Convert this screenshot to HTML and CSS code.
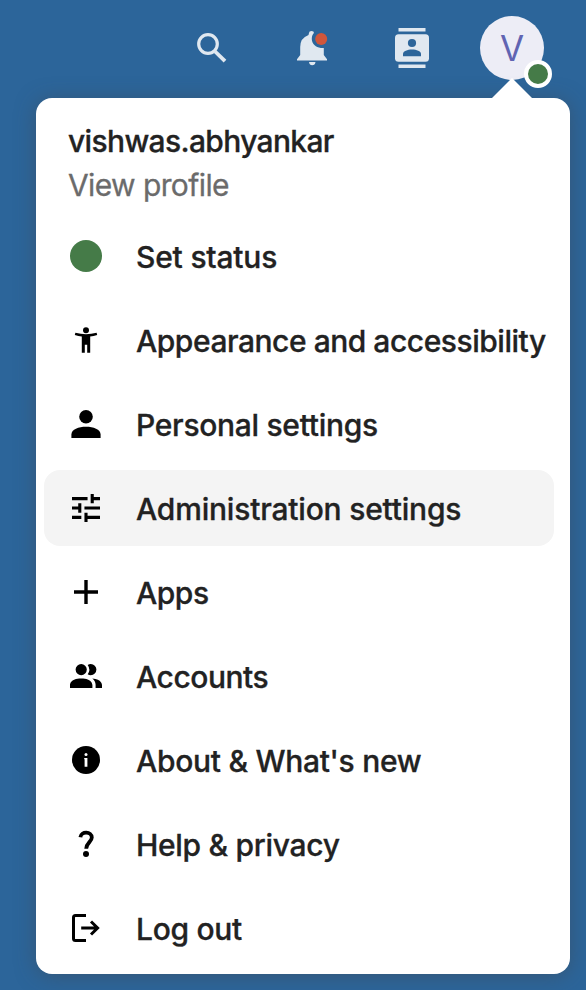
FILE: index.html
```
<!DOCTYPE html>
<html lang="en">
<head>
<meta charset="utf-8">
<title>Account menu</title>
<link rel="stylesheet" href="styles.css">
</head>
<body>
<header class="topbar">
  <button class="tool" aria-label="Search"><svg width="32" height="32" viewBox="0 0 32 32" fill="none" stroke="#e0e8f0"><circle cx="12" cy="12" r="9.3" stroke-width="3.2"/><path d="M19.1 19.5 29 29.2" stroke-width="3.8"/></svg></button>
  <button class="tool" aria-label="Notifications"><svg width="32" height="36" viewBox="0 0 32 36"><path fill="#e0e8f0" d="M13 3Q13 1 15.5 1Q18 1 18 3C13.8 7 15 18.5 27.8 18V25L31 29.2V30.5H1V29.2L4.2 25V17Q4.2 8 12.5 5ZM13 32H19.5Q19 35.2 16.2 35.2Q13.5 35.2 13 32Z"/><circle cx="25.2" cy="9" r="6" fill="#d0563b"/></svg></button>
  <button class="tool" aria-label="Contacts"><svg width="34" height="40" viewBox="0 0 34 40"><path fill="#e0e8f0" d="M3.5 0h27v3.6h-27zM3.5 36.4h27V40h-27z"/><rect y="6.2" width="34" height="27.6" rx="3.5" fill="#e0e8f0"/><g fill="#2c659a"><circle cx="17" cy="15" r="4.1"/><path d="M8 28.2V26c0-6 18-6 18 0v2.2z"/></g></svg></button>
  <button class="avatar" aria-label="Account">V<span class="presence"></span></button>
</header>
<nav class="menu">
  <div class="profile"><div class="name">vishwas.abhyankar</div><div class="view">View profile</div></div>
  <ul class="items">
    <li class="item"><svg viewBox="0 0 32 32"><circle cx="16" cy="16" r="16" fill="#457b48"/></svg><span class="loose">Set status</span></li>
    <li class="item"><svg viewBox="0 0 32 32"><circle cx="16" cy="6.2" r="3"/><path d="M5.4 8.8Q16 11.6 26.6 8.8L27.2 11.1Q23.5 12.2 20.2 12.5V28.7H17.2V20.7H14.8V28.7H11.8V12.5Q8.5 12.2 4.8 11.1Z"/></svg><span class="tight">Appearance and accessibility</span></li>
    <li class="item"><svg viewBox="0 0 32 32"><circle cx="16" cy="8.7" r="6.8"/><path d="M1.4 30v-3.5C1.4 16.2 30.6 16.2 30.6 26.5V30z"/></svg><span>Personal settings</span></li>
    <li class="item active"><svg viewBox="1.714 1.714 20.571 20.571"><path d="M3 17v2h6v-2H3M3 5v2h10V5H3m10 16v-2h8v-2h-8v-2h-2v6h2M7 9v2H3v2h4v2h2V9H7m14 4v-2H11v2h10m-6-4h2V7h4V5h-4V3h-2v6z"/></svg><span class="loose">Administration settings</span></li>
    <li class="item"><svg viewBox="0 0 32 32"><path d="M14.3 4h3.4v10.300H28v3.400H17.700V28h-3.400V17.700H4v-3.400h10.300z"/></svg><span class="tight">Apps</span></li>
    <li class="item"><svg viewBox="2 1.5 20 20"><path d="M16 17v2H2v-2s0-4 7-4 7 4 7 4m-3.500-9.500A3.500 3.500 0 1 0 9 11a3.500 3.500 0 0 0 3.500-3.500m3.440 5.500A5.320 5.320 0 0 1 18 17v2h4v-2s0-3.630-6.060-4M15 4a3.390 3.390 0 0 0-1.930.590 5 5 0 0 1 0 5.820A3.390 3.390 0 0 0 15 11a3.500 3.500 0 0 0 0-7z"/></svg><span class="tight">Accounts</span></li>
    <li class="item"><svg viewBox="0 0 32 32"><circle cx="16" cy="16" r="14"/><circle cx="16" cy="10.6" r="1.5" fill="#fff"/><path fill="#fff" d="M14.200 14h3.200v8.800h-2.800V15.300h-.4z"/></svg><span>About &amp; What's new</span></li>
    <li class="item"><svg viewBox="0 0 32 32"><path d="M10.400 9.200C11 3 21.800 3.200 21.800 9.600C21.800 13.800 16.200 14.800 16.200 20.800" fill="none" stroke="#000" stroke-width="3.800"/><circle cx="16" cy="26.100" r="3"/></svg><span>Help &amp; privacy</span></li>
    <li class="item"><svg viewBox="0 0 32 32" fill="none" stroke="#000" stroke-width="3"><path d="M16 3.500H5.500q-2 0-2 2v21q0 2 2 2H16M11.200 16H28M21 9.500l6.600 6.500-6.600 6.500"/></svg><span>Log out</span></li>
  </ul>
</nav>
</body>
</html>
```
FILE: styles.css
```
* { box-sizing: border-box; }
body {
  margin: 0;
  width: 586px;
  height: 990px;
  overflow: hidden;
  background: #2c659a;
  font-family: Inter, "Liberation Sans", sans-serif;
  color: #222;
}
button { border: 0; padding: 0; background: none; font: inherit; }
.topbar {
  display: flex;
  align-items: center;
  height: 98px;
  padding: 0 42px 2px 162px;
}
.tool {
  display: flex;
  justify-content: center;
  align-items: center;
  width: 100px;
  height: 96px;
}
.tool svg { display: block; }
.avatar {
  position: relative;
  width: 64px;
  height: 64px;
  margin-left: 18px;
  border-radius: 50%;
  background: #ededf6;
  color: #6064b2;
  font-size: 35px;
  line-height: 64px;
  text-align: center;
  flex: none;
}
.presence {
  position: absolute;
  z-index: 2;
  left: 44px;
  top: 44px;
  width: 28px;
  height: 28px;
  border: 4px solid #fff;
  border-radius: 50%;
  background: #457b48;
}
.menu {
  position: relative;
  width: 534px;
  height: 876px;
  margin-left: 36px;
  padding-top: 21px;
  border-radius: 16px;
  background: #fff;
  box-shadow: 0 2px 20px rgba(64, 72, 80, .5);
}
.menu::before {
  content: "";
  position: absolute;
  left: 456px;
  top: -20px;
  border: 20px solid transparent;
  border-top: 0;
  border-bottom-color: #fff;
}
.profile {
  height: 95px;
  padding-left: 32px;
  font-size: 30px;
  line-height: 44px;
}
.name { font-weight: 500; letter-spacing: -.65px; -webkit-text-stroke: .3px #222; }
.view { color: #6b6b6b; letter-spacing: -.6px; -webkit-text-stroke: .3px #6b6b6b; }
.items {
  display: flex;
  flex-direction: column;
  gap: 8px;
  margin: 0;
  padding: 4px 16px 0 8px;
  list-style: none;
}
.item {
  display: flex;
  align-items: center;
  gap: 34px;
  height: 76px;
  padding-left: 26px;
  border-radius: 16px;
  font-size: 30px;
  font-weight: 500;
  white-space: nowrap;
  letter-spacing: -.3px;
  -webkit-text-stroke: .3px #222;
}
.item svg { width: 32px; height: 32px; flex: none; }
.item span { padding-top: 1px; }
.item .loose { letter-spacing: -.2px; }
.item .tight { letter-spacing: -.47px; }
.active { background: #f4f4f4; }
```
